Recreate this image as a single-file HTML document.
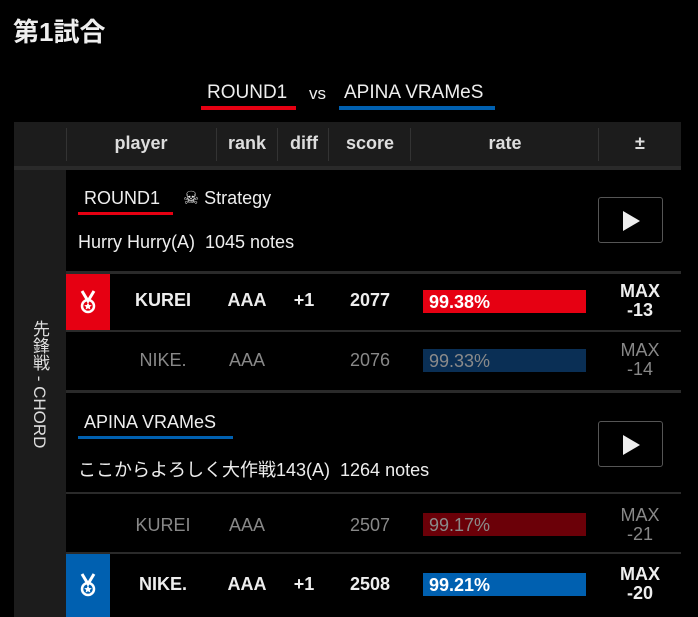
<!DOCTYPE html>
<html><head><meta charset="utf-8"><style>
*{margin:0;padding:0;box-sizing:border-box}
body{width:698px;height:617px;background:#000;color:#eee;font-family:"Liberation Sans","Noto Sans CJK JP",sans-serif;position:relative;overflow:hidden}
.a{position:absolute}
.c{position:absolute;text-align:center;transform:translateX(-50%);white-space:nowrap}
.h{font-size:18px;font-weight:bold;color:#ddd;top:133px}
.sep{position:absolute;top:128px;width:1px;height:33px;background:#333}
.row{font-size:18px;font-weight:bold}
.dim{color:#888;font-weight:normal}
.bar{position:absolute;left:423px;width:163px;height:23px;font-size:18px;font-weight:bold;padding:2px 0 0 6px;color:#fff}
.play{position:absolute;left:598px;width:65px;height:46px;border:1px solid #555;border-radius:3px;background:#000}
.play:after{content:"";position:absolute;left:24px;top:13px;border-left:17px solid #eee;border-top:10px solid transparent;border-bottom:10px solid transparent}
.line{position:absolute;left:66px;width:615px;height:3px;background:#2a2a2a}
.medal{position:absolute;left:66px;width:44px}
.medal svg{position:absolute;left:13px}
</style></head><body>
<div class="a" style="left:13px;top:12px;font-size:26px;font-weight:bold;color:#eee">第1試合</div>
<div class="a" style="left:207px;top:82px;font-size:19px;color:#eee">ROUND1</div>
<div class="a" style="left:201px;top:106px;width:95px;height:4px;background:#e60012"></div>
<div class="a" style="left:309px;top:84px;font-size:17px;color:#eee">vs</div>
<div class="a" style="left:344px;top:82px;font-size:19px;color:#eee">APINA VRAMeS</div>
<div class="a" style="left:339px;top:106px;width:156px;height:4px;background:#0060b0"></div>

<div class="a" style="left:14px;top:122px;width:667px;height:44px;background:#1c1c1c"></div>
<div class="a" style="left:14px;top:166px;width:667px;height:4px;background:#2a2a2a"></div>
<div class="sep" style="left:66px"></div><div class="sep" style="left:216px"></div><div class="sep" style="left:277px"></div><div class="sep" style="left:328px"></div><div class="sep" style="left:410px"></div><div class="sep" style="left:598px"></div>
<div class="c h" style="left:141px">player</div>
<div class="c h" style="left:247px">rank</div>
<div class="c h" style="left:304px">diff</div>
<div class="c h" style="left:370px">score</div>
<div class="c h" style="left:505px">rate</div>
<div class="c h" style="left:640px">±</div>

<div class="a" style="left:14px;top:170px;width:52px;height:447px;background:#1c1c1c"></div>
<div class="a" style="left:27px;top:320px;font-size:17px;color:#ddd;writing-mode:vertical-rl">先鋒戦 - CHORD</div>

<div class="a" style="left:84px;top:188px;font-size:18px;color:#eee">ROUND1</div>
<div class="a" style="left:78px;top:212px;width:95px;height:3px;background:#e60012"></div>
<div class="a" style="left:183px;top:188px;font-size:18px;color:#eee">☠ Strategy</div>
<div class="a" style="left:78px;top:232px;font-size:18px;color:#eee">Hurry Hurry(A)&nbsp; 1045 notes</div>
<div class="play" style="top:197px"></div>
<div class="line" style="top:271px"></div>

<div class="medal" style="top:274px;height:56px;background:#e60012">
<svg style="top:16px" width="18" height="24" viewBox="0 0 18 24"><path d="M3 1 L9 11 L15 1" fill="none" stroke="#fff" stroke-width="3"/><circle cx="9" cy="16" r="6" fill="none" stroke="#fff" stroke-width="2.5"/><path d="M9 12.5 L10.2 15 L12.8 15.3 L10.8 17 L11.4 19.5 L9 18.2 L6.6 19.5 L7.2 17 L5.2 15.3 L7.8 15 Z" fill="#fff"/></svg>
</div>
<div class="c row" style="left:163px;top:290px">KUREI</div>
<div class="c row" style="left:247px;top:290px">AAA</div>
<div class="c row" style="left:304px;top:290px">+1</div>
<div class="c row" style="left:370px;top:290px">2077</div>
<div class="bar" style="top:290px;background:#e60012">99.38%</div>
<div class="c row" style="left:640px;top:282px;line-height:19px">MAX<br>-13</div>
<div class="line" style="top:330px;height:2px"></div>

<div class="c row dim" style="left:163px;top:350px">NIKE.</div>
<div class="c row dim" style="left:247px;top:350px">AAA</div>
<div class="c row dim" style="left:370px;top:350px">2076</div>
<div class="bar" style="top:349px;background:#0a2f55;color:#8a8a8a;font-weight:normal">99.33%</div>
<div class="c row dim" style="left:640px;top:341px;line-height:19px">MAX<br>-14</div>
<div class="line" style="top:390px"></div>

<div class="a" style="left:84px;top:412px;font-size:18px;color:#eee">APINA VRAMeS</div>
<div class="a" style="left:78px;top:436px;width:155px;height:3px;background:#0060b0"></div>
<div class="a" style="left:78px;top:456px;font-size:18px;color:#eee">ここからよろしく大作戦143(A)&nbsp; 1264 notes</div>
<div class="play" style="top:421px"></div>
<div class="line" style="top:492px;height:2px"></div>

<div class="c row dim" style="left:163px;top:515px">KUREI</div>
<div class="c row dim" style="left:247px;top:515px">AAA</div>
<div class="c row dim" style="left:370px;top:515px">2507</div>
<div class="bar" style="top:513px;background:#6b0008;color:#8a8a8a;font-weight:normal">99.17%</div>
<div class="c row dim" style="left:640px;top:506px;line-height:19px">MAX<br>-21</div>
<div class="line" style="top:552px;height:2px"></div>

<div class="medal" style="top:554px;height:63px;background:#0060b0">
<svg style="top:19px" width="18" height="24" viewBox="0 0 18 24"><path d="M3 1 L9 11 L15 1" fill="none" stroke="#fff" stroke-width="3"/><circle cx="9" cy="16" r="6" fill="none" stroke="#fff" stroke-width="2.5"/><path d="M9 12.5 L10.2 15 L12.8 15.3 L10.8 17 L11.4 19.5 L9 18.2 L6.6 19.5 L7.2 17 L5.2 15.3 L7.8 15 Z" fill="#fff"/></svg>
</div>
<div class="c row" style="left:163px;top:574px">NIKE.</div>
<div class="c row" style="left:247px;top:574px">AAA</div>
<div class="c row" style="left:304px;top:574px">+1</div>
<div class="c row" style="left:370px;top:574px">2508</div>
<div class="bar" style="top:573px;background:#0060b0">99.21%</div>
<div class="c row" style="left:640px;top:565px;line-height:19px">MAX<br>-20</div>
</body></html>
